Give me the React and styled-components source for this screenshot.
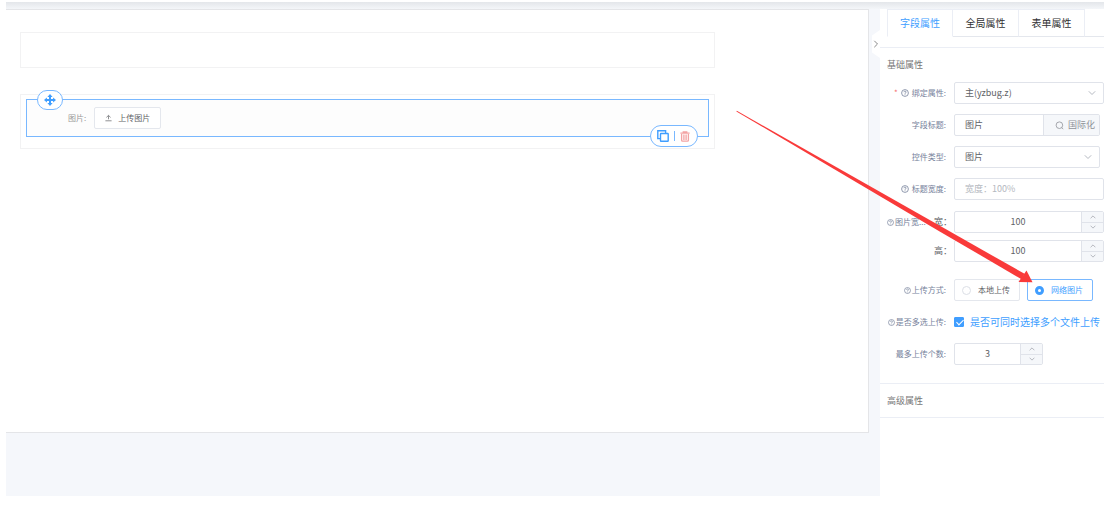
import { useState } from 'react';
import styled, { createGlobalStyle } from 'styled-components';

const GlobalStyle = createGlobalStyle`
  * {
    box-sizing: border-box;
  }

  body {
    margin: 0;
    background: #fff;
    color: #606266;
    font-family: 'Noto Sans CJK SC', 'Noto Sans', sans-serif;
    font-size: 9px;
    line-height: 12px;
  }

  button,
  input,
  select {
    font: inherit;
    color: inherit;
    margin: 0;
    padding: 0;
  }

  button {
    cursor: pointer;
  }
`;

const Page = styled.div`
  display: flex;
  flex-direction: column;
  min-height: calc(100vh - 29px);
  margin: 2px 0 27px 6px;
  background: #f5f7fb;
`;

const TopShadow = styled.div`
  height: 7px;
  background: linear-gradient(to bottom, #e3e6ea, #f4f6f9);
`;

const Workspace = styled.div`
  flex: 1;
  display: flex;
`;

const Canvas = styled.main`
  flex: 1;
  margin-bottom: 63px;
  padding: 22px 153px 22px 14px;
  display: flex;
  flex-direction: column;
  gap: 26px;
  background: #fff;
  border: 1px solid #e4e5e8;
  border-left: none;
`;

const FormBlock = styled.div`
  min-height: 36px;
  padding: 4px 5px 5px;
  border: 1px solid #f2f2f3;
`;

const SelectedField = styled.div`
  position: relative;
  display: flex;
  align-items: flex-start;
  gap: 8px;
  min-height: 38px;
  margin-bottom: 6px;
  padding: 7px 7px 6px 41px;
  background: #fdfdfd;
  border: 1px solid #79b8ff;
`;

const FieldLabel = styled.span`
  color: #999;
  font-size: 8px;
  line-height: 22px;
`;

const UploadButton = styled.button`
  display: flex;
  align-items: center;
  gap: 6px;
  height: 22px;
  padding: 0 10px;
  background: #fff;
  border: 1px solid #e4e7ed;
  border-radius: 2px;
  font-size: 8px;
`;

const Handle = styled.button`
  position: absolute;
  top: -10px;
  left: 10px;
  width: 26px;
  height: 20px;
  display: flex;
  align-items: center;
  justify-content: center;
  background: #fff;
  border: 1px solid #79b8ff;
  border-radius: 10px;
  color: #409eff;
`;

const FieldActions = styled.div`
  position: absolute;
  right: 10px;
  bottom: -11px;
  width: 48px;
  height: 22px;
  display: flex;
  align-items: center;
  justify-content: space-between;
  padding: 0 7px 0 6px;
  background: #fff;
  border: 1px solid #79b8ff;
  border-radius: 11px;
`;

const ActionButton = styled.button`
  display: flex;
  background: none;
  border: none;
  color: ${({ $danger }) => ($danger ? '#f3a3a3' : '#409eff')};
`;

const ActionDivider = styled.span`
  width: 1px;
  height: 10px;
  background: #79b8ff;
`;

const Gutter = styled.div`
  width: 11px;
  display: flex;
  justify-content: flex-end;
  align-items: flex-start;
`;

const CollapseButton = styled.button`
  width: 8px;
  height: 28px;
  margin-top: 21px;
  display: flex;
  align-items: center;
  justify-content: center;
  background: #fff;
  border: none;
  clip-path: polygon(0 20%, 100% 0, 100% 100%, 0 80%);
  color: #888;
`;

const Panel = styled.aside`
  width: 224px;
  background: #fff;
`;

const Tabs = styled.div`
  display: flex;
  margin-left: 7px;
  border-bottom: 1px solid #e4e7ed;
`;

const Tab = styled.button`
  width: 66px;
  height: 28px;
  margin-bottom: -1px;
  background: #fff;
  border: 1px solid #ebeef5;
  border-left-width: ${({ $active }) => ($active ? '1px' : '0')};
  border-bottom-color: ${({ $active }) => ($active ? '#fff' : '#e4e7ed')};
  color: ${({ $active }) => ($active ? '#409eff' : '#303133')};
  font-size: 10px;
`;

const Section = styled.section`
  border-top: ${({ $first }) => ($first ? '1px' : '0')} solid #ebeef5;
  border-bottom: 1px solid #ebeef5;
  margin-top: ${({ $first }) => ($first ? '10px' : '0')};
`;

const SectionTitle = styled.h2`
  margin: 0;
  padding: 0 7px;
  font-size: 9px;
  font-weight: 400;
  line-height: 33px;
  color: #777;
`;

const FormRows = styled.div`
  display: flex;
  flex-direction: column;
  gap: 10px;
  padding: 1px 0 18px;
`;

const Row = styled.div`
  display: flex;
  align-items: center;
  min-height: 22px;
  padding-right: ${({ $inset }) => ($inset ? '4px' : '0')};
`;

const RowLabel = styled.label`
  flex: none;
  display: flex;
  align-items: center;
  justify-content: flex-end;
  gap: ${({ $tight }) => ($tight ? '1px' : '3px')};
  width: 66px;
  margin-right: 8px;
  font-size: 8px;
  color: #76819b;
  white-space: nowrap;
`;

const Required = styled.span`
  color: #f56c6c;
`;

const SizeGroup = styled.div`
  display: flex;
  flex-direction: column;
  gap: 7px;
  margin: 1px 0 7px;
`;

const SizeName = styled.label`
  flex: none;
  width: ${({ $alone }) => ($alone ? '74px' : '20px')};
  padding-left: ${({ $alone }) => ($alone ? '54px' : '0')};
  white-space: nowrap;
`;

const SizeLabel = styled.span`
  flex: none;
  width: 54px;
  padding-left: 7px;
  display: flex;
  align-items: center;
  gap: 1px;
  font-size: 8px;
  color: #76819b;
`;

const Box = styled.div`
  position: relative;
  flex: ${({ $small }) => ($small ? 'none' : '1')};
  width: ${({ $small }) => ($small ? '89px' : 'auto')};
  min-width: 0;
  height: 22px;
  display: flex;
  border: 1px solid #e0e3ea;
  border-radius: 2px;
  background: #fff;
  overflow: hidden;
`;

const TextInput = styled.input`
  flex: 1;
  min-width: 0;
  padding: 0 10px;
  background: none;
  border: none;
  outline: none;
  text-align: ${({ $center }) => ($center ? 'center' : 'left')};

  &::placeholder {
    color: #b4b8c0;
  }
`;

const SelectInput = styled.select`
  flex: 1;
  min-width: 0;
  padding: 0 24px 0 10px;
  appearance: none;
  background: none;
  border: none;
  outline: none;
`;

const SelectArrow = styled.span`
  position: absolute;
  top: 6px;
  right: 7px;
  display: flex;
  color: #b4b8c0;
  pointer-events: none;
`;

const AppendButton = styled.button`
  display: flex;
  align-items: center;
  justify-content: flex-end;
  gap: 4px;
  width: 56px;
  padding-right: 4px;
  background: #f5f7fa;
  border: none;
  border-left: 1px solid #e0e3ea;
  color: #909399;
`;

const Stepper = styled.div`
  width: 22px;
  display: flex;
  flex-direction: column;
  border-left: 1px solid #e0e3ea;
`;

const StepButton = styled.button`
  flex: 1;
  display: flex;
  align-items: center;
  justify-content: center;
  background: #f5f7fa;
  border: none;
  color: #a0a4ac;

  & + & {
    border-top: 1px solid #e0e3ea;
  }
`;

const RadioGroup = styled.div`
  display: flex;
  gap: 7px;
`;

const RadioCard = styled.label`
  display: flex;
  align-items: center;
  gap: 7px;
  width: 66px;
  height: 22px;
  padding-left: 7px;
  border: 1px solid ${({ $checked }) => ($checked ? '#79b8ff' : '#e4e7ed')};
  border-radius: 2px;
  color: ${({ $checked }) => ($checked ? '#409eff' : '#606266')};
  font-size: 8px;
  white-space: nowrap;
`;

const Radio = styled.input`
  appearance: none;
  width: 9px;
  height: 9px;
  border: 1px solid #dcdfe6;
  border-radius: 50%;

  &:checked {
    border: 3px solid #409eff;
  }
`;

const CheckLabel = styled.label`
  display: flex;
  align-items: center;
  gap: 6px;
  color: #409eff;
  font-size: 10px;
  white-space: nowrap;
`;

const Checkbox = styled.input`
  appearance: none;
  position: relative;
  width: 10px;
  height: 10px;
  border: 1px solid #409eff;
  border-radius: 1px;

  &:checked {
    background: #409eff;
  }

  &:checked::after {
    content: '';
    position: absolute;
    left: 3px;
    top: 0;
    width: 3px;
    height: 6px;
    border: solid #fff;
    border-width: 0 1px 1px 0;
    transform: rotate(45deg);
  }
`;

const Pointer = styled.svg`
  position: absolute;
  top: 105px;
  right: 66px;
  pointer-events: none;
`;

function MoveIcon() {
  return (
    <svg width="12" height="12" viewBox="0 0 12 12" fill="currentColor">
      <path d="M6 0 8.6 2.9H7V5H9.1V3.4L12 6 9.1 8.6V7H7V9.1H8.6L6 12 3.4 9.1H5V7H2.9V8.6L0 6 2.9 3.4V5H5V2.9H3.4Z" />
    </svg>
  );
}

function CopyIcon() {
  return (
    <svg width="12" height="12" viewBox="0 0 12 12" fill="none" stroke="currentColor" strokeWidth="1.4">
      <path d="M3.5 8.6H.8V.8H8.6V3.4" />
      <rect x="3.5" y="3.5" width="7.7" height="7.7" rx=".5" />
    </svg>
  );
}

function TrashIcon() {
  return (
    <svg width="10" height="11" viewBox="0 0 10 11" fill="none" stroke="currentColor">
      <path d="M.4 2.2H9.6M3.2 2V.8H6.8V2" strokeWidth="1.2" />
      <path d="M1.6 3V9.2Q1.6 10.2 2.6 10.2H7.4Q8.4 10.2 8.4 9.2V3M3.9 3.5V9M6.1 3.5V9" strokeWidth="1.3" />
    </svg>
  );
}

function UploadIcon() {
  return (
    <svg width="7" height="8" viewBox="0 0 7 8" fill="none" stroke="currentColor" strokeWidth=".7">
      <path d="M3.5 5.3V1.6M1.4 3.4 3.5 1.4 5.6 3.4M.4 6.8H6.6" />
    </svg>
  );
}

function HelpIcon({ size = 8 }) {
  return (
    <svg width={size} height={size} viewBox="0 0 8 8" fill="none" stroke="currentColor" strokeWidth=".8">
      <circle cx="4" cy="4" r="3.4" />
      <path d="M2.9 3.2C2.9 1.8 5.1 1.8 5.1 3.1 5.1 3.9 4 3.8 4 4.8M4 5.4V6.1" />
    </svg>
  );
}

function SearchIcon() {
  return (
    <svg width="9" height="9" viewBox="0 0 9 9" fill="none" stroke="currentColor" strokeWidth=".8">
      <circle cx="4.4" cy="4.2" r="3.3" />
      <path d="M6.7 6.5 8.2 8.2" />
    </svg>
  );
}

// down by default, the other directions are rotations of it
function Chevron({ width = 8, turn = 0 }) {
  return (
    <svg width={width} height={width} viewBox="0 0 8 8" fill="none" stroke="currentColor">
      <path d="M.8 2.3 4 5.5 7.2 2.3" transform={`rotate(${turn} 4 4)`} />
    </svg>
  );
}

function NumberBox({ id, value, onChange, small }) {
  return (
    <Box $small={small}>
      <TextInput
        id={id}
        $center
        inputMode="numeric"
        value={value}
        onChange={(e) => onChange(Number(e.target.value) || 0)}
      />
      <Stepper>
        <StepButton type="button" aria-label="+" onClick={() => onChange(value + 1)}>
          <Chevron width={6} turn={180} />
        </StepButton>
        <StepButton type="button" aria-label="-" onClick={() => onChange(value - 1)}>
          <Chevron width={6} />
        </StepButton>
      </Stepper>
    </Box>
  );
}

const tabs = ['字段属性', '全局属性', '表单属性'];
const uploadModes = ['本地上传', '网络图片'];

export default function App() {
  const [tab, setTab] = useState(tabs[0]);
  const [title, setTitle] = useState('图片');
  const [labelWidth, setLabelWidth] = useState('');
  const [width, setWidth] = useState(100);
  const [height, setHeight] = useState(100);
  const [mode, setMode] = useState(uploadModes[1]);
  const [multiple, setMultiple] = useState(true);
  const [limit, setLimit] = useState(3);

  return (
    <>
      <GlobalStyle />
      <Page>
        <TopShadow />
        <Workspace>
          <Canvas>
            <FormBlock />
            <FormBlock>
              <SelectedField>
                <Handle type="button" aria-label="移动">
                  <MoveIcon />
                </Handle>
                <FieldLabel>{title}:</FieldLabel>
                <UploadButton type="button">
                  <UploadIcon />
                  上传图片
                </UploadButton>
                <FieldActions>
                  <ActionButton type="button" aria-label="复制">
                    <CopyIcon />
                  </ActionButton>
                  <ActionDivider />
                  <ActionButton type="button" aria-label="删除" $danger>
                    <TrashIcon />
                  </ActionButton>
                </FieldActions>
              </SelectedField>
            </FormBlock>
          </Canvas>

          <Gutter>
            <CollapseButton type="button" aria-label="收起">
              <Chevron turn={-90} />
            </CollapseButton>
          </Gutter>

          <Panel>
            <Tabs role="tablist">
              {tabs.map((name) => (
                <Tab
                  key={name}
                  type="button"
                  role="tab"
                  aria-selected={name === tab}
                  $active={name === tab}
                  onClick={() => setTab(name)}
                >
                  {name}
                </Tab>
              ))}
            </Tabs>

            <Section $first>
              <SectionTitle>基础属性</SectionTitle>
              <FormRows>
                <Row>
                  <RowLabel htmlFor="bind">
                    <Required>*</Required>
                    <HelpIcon />
                    绑定属性:
                  </RowLabel>
                  <Box>
                    <SelectInput id="bind">
                      <option>主(yzbug.z)</option>
                    </SelectInput>
                    <SelectArrow>
                      <Chevron />
                    </SelectArrow>
                  </Box>
                </Row>
                <Row $inset>
                  <RowLabel htmlFor="title">字段标题:</RowLabel>
                  <Box>
                    <TextInput id="title" value={title} onChange={(e) => setTitle(e.target.value)} />
                    <AppendButton type="button">
                      <SearchIcon />
                      国际化
                    </AppendButton>
                  </Box>
                </Row>
                <Row $inset>
                  <RowLabel htmlFor="kind">控件类型:</RowLabel>
                  <Box>
                    <SelectInput id="kind">
                      <option>图片</option>
                    </SelectInput>
                    <SelectArrow>
                      <Chevron />
                    </SelectArrow>
                  </Box>
                </Row>
                <Row>
                  <RowLabel htmlFor="label-width">
                    <HelpIcon />
                    标题宽度:
                  </RowLabel>
                  <Box>
                    <TextInput
                      id="label-width"
                      placeholder="宽度：100%"
                      value={labelWidth}
                      onChange={(e) => setLabelWidth(e.target.value)}
                    />
                  </Box>
                </Row>
                <SizeGroup>
                  <Row>
                    <SizeLabel>
                      <HelpIcon size={7} />
                      图片宽...
                    </SizeLabel>
                    <SizeName htmlFor="width">宽：</SizeName>
                    <NumberBox id="width" value={width} onChange={setWidth} />
                  </Row>
                  <Row>
                    <SizeName htmlFor="height" $alone>高：</SizeName>
                    <NumberBox id="height" value={height} onChange={setHeight} />
                  </Row>
                </SizeGroup>
                <Row>
                  <RowLabel as="span" $tight>
                    <HelpIcon size={7} />
                    上传方式:
                  </RowLabel>
                  <RadioGroup>
                    {uploadModes.map((name) => (
                      <RadioCard key={name} $checked={name === mode}>
                        <Radio
                          type="radio"
                          name="mode"
                          checked={name === mode}
                          onChange={() => setMode(name)}
                        />
                        {name}
                      </RadioCard>
                    ))}
                  </RadioGroup>
                </Row>
                <Row>
                  <RowLabel as="span" $tight>
                    <HelpIcon size={7} />
                    是否多选上传:
                  </RowLabel>
                  <CheckLabel>
                    <Checkbox
                      type="checkbox"
                      checked={multiple}
                      onChange={(e) => setMultiple(e.target.checked)}
                    />
                    是否可同时选择多个文件上传
                  </CheckLabel>
                </Row>
                <Row>
                  <RowLabel htmlFor="limit">最多上传个数:</RowLabel>
                  <NumberBox id="limit" small value={limit} onChange={setLimit} />
                </Row>
              </FormRows>
            </Section>

            <Section>
              <SectionTitle>高级属性</SectionTitle>
            </Section>
          </Panel>
        </Workspace>
      </Page>

      <Pointer width="306" height="184" viewBox="0 0 306 184" fill="#f93a3a">
        <path d="M4.800 5.800 209.200 121.600 292.500 168.800 289.500 174.200 206.800 125.900 4.400 6.500Z" />
        <path d="M294.500 165.500 300.500 177.300 286.500 177Z" />
      </Pointer>
    </>
  );
}
